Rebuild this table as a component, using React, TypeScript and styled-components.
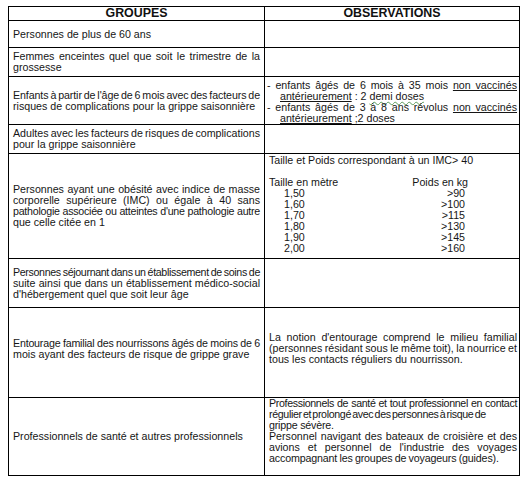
import React from "react";
import styled, { createGlobalStyle, css } from "styled-components";

const GlobalStyle = createGlobalStyle`
  html, body { margin: 0; padding: 0; background: #fff; }
  body { font-family: "Liberation Sans", Arial, sans-serif; color: #111; }
`;

const Page = styled.div`
  padding: 6px 0 0 8px;
`;

const Table = styled.div`
  display: flex;
  flex-direction: column;
  gap: 1px;
  padding: 1px;
  width: 512px;
  box-sizing: border-box;
  background: #000;
`;

const Row = styled.div<{ $h: number }>`
  display: grid;
  grid-template-columns: 255px 254px;
  gap: 1px;
  height: ${(p) => p.$h}px;
`;

const Cell = styled.div<{ $side: "left" | "right"; $top?: boolean; $pt?: number; $pb?: number }>`
  background: #fff;
  display: flex;
  flex-direction: column;
  justify-content: ${(p) => (p.$top ? "flex-start" : "center")};
  padding: ${(p) => p.$pt ?? 0}px ${(p) => (p.$side === "left" ? 4 : 2)}px ${(p) => p.$pb ?? 0}px 4px;
  font-size: 10.67px;
  line-height: 11px;
  color: #161616;
  overflow: hidden;
`;

const HeaderCell = styled.div`
  background: #fff;
  font-weight: bold;
  font-size: 12.4px;
  line-height: 13px;
  text-align: center;
  color: #111;
`;

const Line = styled.span<{ $justify?: boolean; $ws?: number; $ls?: number }>`
  display: block;
  white-space: nowrap;
  ${(p) =>
    p.$justify &&
    css`
      text-align: justify;
      text-align-last: justify;
      word-spacing: -2.5px;
    `}
  ${(p) =>
    p.$ws !== undefined &&
    css`
      word-spacing: ${p.$ws}px;
    `}
  ${(p) =>
    p.$ls !== undefined &&
    css`
      letter-spacing: ${p.$ls}px;
    `}
`;

const BulletLine = styled(Line)<{ $first?: boolean }>`
  ${(p) => (p.$first ? css`margin-left: -2px;` : css`padding-left: 11px;`)}
`;

const U = styled.span`
  text-decoration: underline;
  text-underline-offset: 1px;
`;

const Wavy = styled.span`
  text-decoration: underline wavy #5a9a5a;
  text-decoration-thickness: 1px;
  text-underline-offset: 1px;
`;

const Spacer = styled.div`
  height: 11px;
`;

const TailleGrid = styled.div`
  display: grid;
  grid-template-columns: 139px 60px;
`;

const TailleValue = styled.span<{ $head?: boolean }>`
  padding-left: ${(p) => (p.$head ? 0 : 15)}px;
  white-space: nowrap;
`;

const PoidsValue = styled.span<{ $head?: boolean }>`
  text-align: right;
  white-space: nowrap;
  padding-right: ${(p) => (p.$head ? 0 : 3)}px;
`;

const taille: [string, string][] = [
  ["1,50", ">90"],
  ["1,60", ">100"],
  ["1,70", ">115"],
  ["1,80", ">130"],
  ["1,90", ">145"],
  ["2,00", ">160"],
];

export default function App() {
  return (
    <>
      <GlobalStyle />
      <Page>
        <Table>
          <Row $h={13}>
            <HeaderCell>GROUPES</HeaderCell>
            <HeaderCell>OBSERVATIONS</HeaderCell>
          </Row>

          <Row $h={26}>
            <Cell $side="left">
              <Line>Personnes de plus de 60 ans</Line>
            </Cell>
            <Cell $side="right" />
          </Row>

          <Row $h={28}>
            <Cell $side="left">
              <Line $justify>Femmes enceintes quel que soit le trimestre de la</Line>
              <Line>grossesse</Line>
            </Cell>
            <Cell $side="right" />
          </Row>

          <Row $h={47}>
            <Cell $side="left">
              <Line $justify $ls={-0.1}>Enfants à partir de l'âge de 6 mois avec des facteurs de</Line>
              <Line>risques de complications pour la grippe saisonnière</Line>
            </Cell>
            <Cell $side="right" $pt={2}>
              <BulletLine $first $justify>
                - enfants âgés de 6 mois à 35 mois <U>non vaccinés</U>
              </BulletLine>
              <BulletLine>
                <U>antérieurement</U> : 2 <Wavy>demi doses</Wavy>
              </BulletLine>
              <BulletLine $first $justify>
                - enfants âgés de 3 à 8 ans révolus <U>non vaccinés</U>
              </BulletLine>
              <BulletLine>
                <U>antérieurement</U> <Wavy>;2</Wavy> doses
              </BulletLine>
            </Cell>
          </Row>

          <Row $h={28}>
            <Cell $side="left">
              <Line $justify>Adultes avec les facteurs de risques de complications</Line>
              <Line>pour la grippe saisonnière</Line>
            </Cell>
            <Cell $side="right" />
          </Row>

          <Row $h={104}>
            <Cell $side="left">
              <Line $justify>Personnes ayant une obésité avec indice de masse</Line>
              <Line $justify>corporelle supérieure (IMC) ou égale à 40 sans</Line>
              <Line $justify $ls={-0.25}>pathologie associée ou atteintes d'une pathologie autre</Line>
              <Line>que celle citée en 1</Line>
            </Cell>
            <Cell $side="right" $top $pt={1}>
              <Line>Taille et Poids correspondant à un IMC&gt; 40</Line>
              <Spacer />
              <TailleGrid>
                <TailleValue $head>Taille en mètre</TailleValue>
                <PoidsValue $head>Poids en kg</PoidsValue>
                {taille.map(([t, p]) => (
                  <React.Fragment key={t}>
                    <TailleValue>{t}</TailleValue>
                    <PoidsValue>{p}</PoidsValue>
                  </React.Fragment>
                ))}
              </TailleGrid>
            </Cell>
          </Row>

          <Row $h={48}>
            <Cell $side="left">
              <Line $justify $ls={-0.35}>Personnes séjournant dans un établissement de soins de</Line>
              <Line $justify>suite ainsi que dans un établissement médico-social</Line>
              <Line>d'hébergement quel que soit leur âge</Line>
            </Cell>
            <Cell $side="right" />
          </Row>

          <Row $h={89}>
            <Cell $side="left" $pb={8}>
              <Line $justify $ls={-0.2}>Entourage familial des nourrissons âgés de moins de 6</Line>
              <Line>mois ayant des facteurs de risque de grippe grave</Line>
            </Cell>
            <Cell $side="right" $pb={8}>
              <Line $justify>La notion d'entourage comprend le milieu familial</Line>
              <Line $justify>(personnes résidant sous le même toit), la nourrice et</Line>
              <Line>tous les contacts réguliers du nourrisson.</Line>
            </Cell>
          </Row>

          <Row $h={77}>
            <Cell $side="left">
              <Line>Professionnels de santé et autres professionnels</Line>
            </Cell>
            <Cell $side="right" $top>
              <Line $justify $ls={-0.35}>Professionnels de santé et tout professionnel en contact</Line>
              <Line $ws={-1.4} $ls={-0.35}>régulier et prolongé avec des personnes à risque de</Line>
              <Line $ls={-0.2}>grippe sévère.</Line>
              <Line $justify>Personnel navigant des bateaux de croisière et des</Line>
              <Line $justify>avions et personnel de l'industrie des voyages</Line>
              <Line $ls={-0.15} $ws={-0.5}>accompagnant les groupes de voyageurs (guides).</Line>
            </Cell>
          </Row>
        </Table>
      </Page>
    </>
  );
}
